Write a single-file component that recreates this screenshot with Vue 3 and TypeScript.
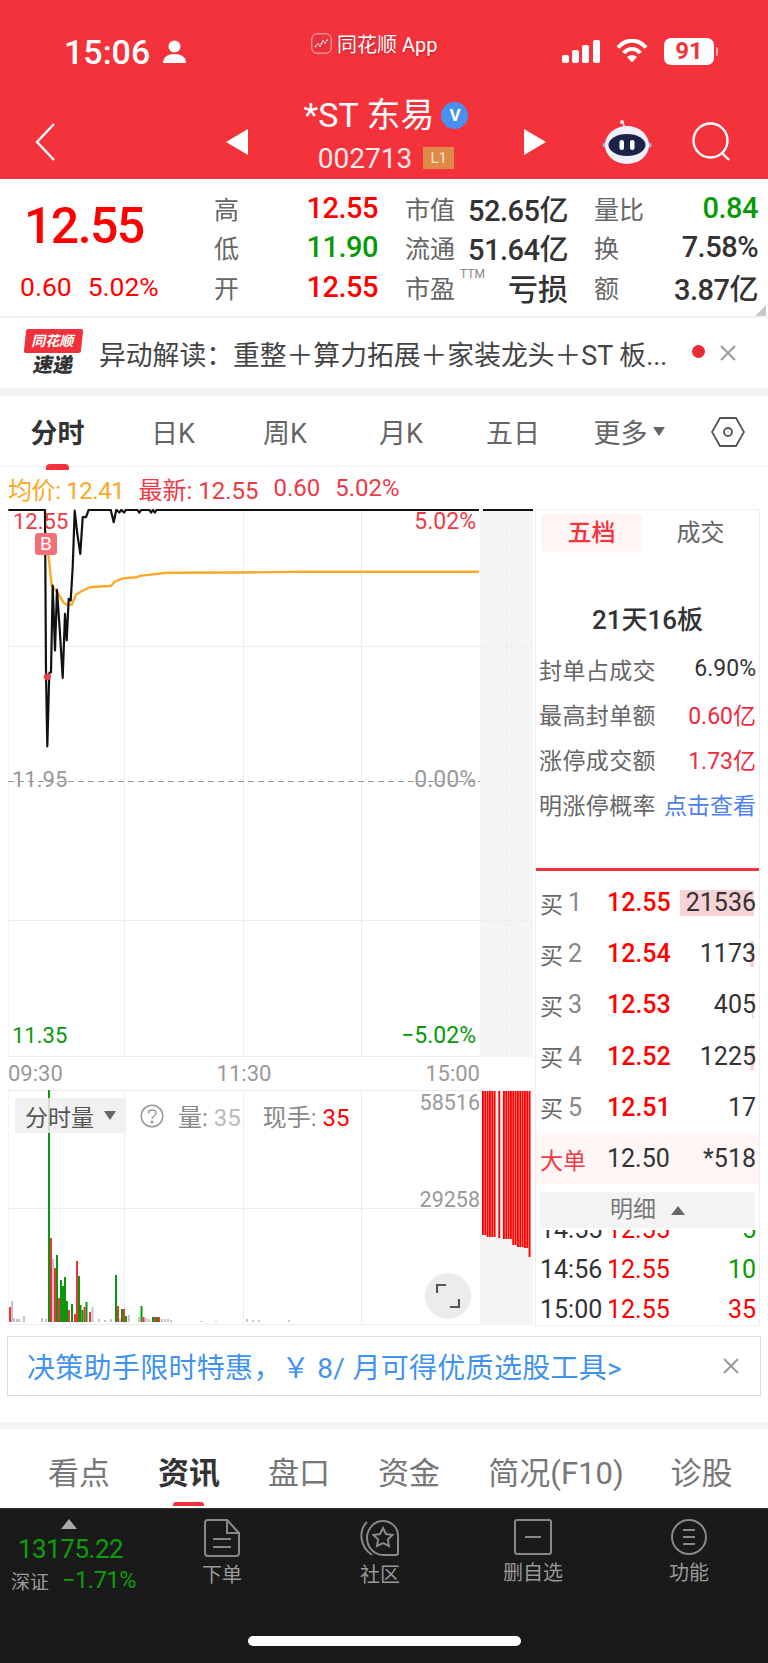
<template>
  <div class="page">
    <header class="head">
      <div class="status">
        <div class="clock">
          <span>15:06</span>
          <svg width="23" height="24" viewBox="0 0 23 24"><circle cx="11.5" cy="6.5" r="6" fill="#fff" /><path d="M0 23c0-6 5-9 11.5-9S23 17 23 23z" fill="#fff" /></svg>
        </div>
        <div class="applabel">
          <svg width="21" height="21" viewBox="0 0 21 21"><rect x="0.8" y="0.8" width="19.4" height="19.4" rx="5" fill="#e8333c" stroke="#f9b9bb" /><path d="M4 14l3-3 2 2 3-5 2 2 3-4" fill="none" stroke="#fff" stroke-width="1.4" stroke-dasharray="2 1" /></svg>
          <span>同花顺 App</span>
        </div>
        <div class="sysicons">
          <svg width="38" height="23" viewBox="0 0 38 23" fill="#fff"><rect x="0" y="15" width="7" height="8" rx="2" /><rect x="10" y="10" width="7" height="13" rx="2" /><rect x="20" y="5" width="7" height="18" rx="2" /><rect x="31" y="0" width="7" height="23" rx="2" /></svg>
          <svg width="32" height="24" viewBox="0 0 32 24" fill="none" stroke="#fff" stroke-width="4"><path d="M2 8.500C10-0.500 22-0.500 30 8.500" /><path d="M7.500 14C12.500 8.500 19.500 8.500 24.500 14" /><path d="M16 23.500l-5-5.500c3-2.500 7-2.500 10 0z" fill="#fff" stroke="none" /></svg>
          <div class="battery"><span>91</span></div>
        </div>
      </div>
      <nav class="nav">
        <svg width="22" height="40" viewBox="0 0 22 40" fill="none" stroke="#fff" stroke-width="2.400"><path d="M20 2L3 20l17 18" /></svg>
        <svg width="22" height="26" viewBox="0 0 22 26" fill="#fff"><path d="M22 0v26L0 13z" /></svg>
        <div class="title">
          <div class="name">
            <span>*ST 东易</span>
            <i class="vbadge">V</i>
          </div>
          <div class="code"><span>002713</span><b>L1</b></div>
        </div>
        <svg width="22" height="26" viewBox="0 0 22 26" fill="#fff"><path d="M0 0v26l22-13z" /></svg>
        <svg class="robot" width="50" height="46" viewBox="0 0 50 46">
          <circle cx="20" cy="3" r="2" fill="#eadff5" />
          <path d="M21 4l2 5" stroke="#eadff5" stroke-width="1.500" />
          <circle cx="3" cy="26" r="2.500" fill="#9fb4ee" /><circle cx="47" cy="26" r="2.500" fill="#9fb4ee" />
          <ellipse cx="25" cy="26" rx="22" ry="19" fill="#eef0fb" />
          <ellipse cx="25" cy="26" rx="18.500" ry="11" fill="#1c2348" />
          <rect x="17.500" y="21" width="4.500" height="10" rx="2.200" fill="#fff" /><rect x="28" y="21" width="4.500" height="10" rx="2.200" fill="#fff" />
        </svg>
        <svg class="search" width="40" height="40" viewBox="0 0 40 40" fill="none" stroke="#fff" stroke-width="2.400"><circle cx="18.500" cy="18.500" r="17" /><path d="M30 31l7 7" /></svg>
      </nav>
    </header>

    <section class="quote">
      <div class="big">
        <div class="bigprice">12.55</div>
        <div class="bigchg"><span>0.60</span><span>5.02%</span></div>
      </div>
      <template v-for="c in quoteCells" :key="c.label">
        <div class="cell" :class="c.cls">
          <span class="lab">{{ c.label }}<sup v-if="c.sup">{{ c.sup }}</sup></span>
          <span class="val" :class="c.color">{{ c.value }}</span>
        </div>
      </template>
      <i class="corner"></i>
    </section>

    <section class="news">
      <div class="newslogo">
        <div class="logotop"><span>同花顺</span></div>
        <div class="logobot">速递</div>
      </div>
      <div class="newstext">异动解读：重整＋算力拓展＋家装龙头＋ST 板...</div>
      <i class="reddot"></i>
      <svg class="x" width="16" height="16" viewBox="0 0 16 16" stroke="#9a9a9a" stroke-width="2"><path d="M1 1l14 14M15 1L1 15" /></svg>
    </section>

    <section class="tabs">
      <span v-for="t in chartTabs" :key="t" class="tab" :class="{ on: t === '分时' }">{{ t }}</span>
      <span class="tab more">更多<i class="tri"></i></span>
      <span class="tab">
        <svg width="34" height="30" viewBox="0 0 34 30" fill="none" stroke="#555" stroke-width="1.800"><path d="M9 1h16l8 14-8 14H9L1 15z" /><circle cx="17" cy="15" r="4" /></svg>
      </span>
    </section>

    <div class="infoline">
      <span class="avg">均价: 12.41</span>
      <span class="latest">最新: 12.55</span>
      <span class="latest">0.60</span>
      <span class="latest">5.02%</span>
    </div>

    <section class="market">
      <div class="charts">
        <div class="pricechart">
          <svg width="527" height="548" viewBox="0 0 527 548">
            <rect x="472" y="0" width="53" height="548" fill="#f4f4f4" />
            <path d="M0 .5V548M0 547.500H472M116.500 0V548M235.500 0V548M353.500 0V548M0 137.500H472M0 411.500H472" stroke="#ececec" fill="none" />
            <path d="M472 137.500H525M472 411.500H525M498.500 0V548" stroke="#e6e6e6" stroke-dasharray="2 3" fill="none" />
            <path d="M0 272.500H472" stroke="#999" stroke-dasharray="6 4" fill="none" />
            <polyline :points="avgPoints" fill="none" stroke="#f9a92b" stroke-width="2.400" />
            <polyline :points="pricePoints" fill="none" stroke="#111" stroke-width="2.200" stroke-linejoin="round" />
            <path d="M475 1H525" stroke="#111" stroke-width="2" />
            <circle cx="39.300" cy="167.700" r="3.500" fill="#e8404a" />
          </svg>
          <span class="axis tl red">12.55</span>
          <span class="bmark">B</span>
          <span class="axis tr red">5.02%</span>
          <span class="axis ml gray">11.95</span>
          <span class="axis mr gray">0.00%</span>
          <span class="axis bl green">11.35</span>
          <span class="axis br green">−5.02%</span>
        </div>
        <div class="times"><span>09:30</span><span>11:30</span><span>15:00</span></div>
        <div class="volchart">
          <svg width="527" height="235" viewBox="0 0 527 235">
            <rect x="472" y="0" width="53" height="235" fill="#f4f4f4" />
            <path d="M0 .5H472M0 .5V235M0 234.500H472M116.500 0V235M235.500 0V235M353.500 0V235M0 118.500H472" stroke="#ececec" fill="none" />
            <rect v-for="(b, i) in volBars" :key="i" :x="b.x" :y="232 - b.h" width="2" :height="b.h" :fill="barColors[b.c]" />
            <rect v-for="(b, i) in closeBars" :key="'c' + i" :x="b.x" y="1" width="1.900" :height="b.h" fill="#f00" />
          </svg>
          <div class="volbar">
            <span class="volsel">分时量<i class="tri"></i></span>
            <svg width="24" height="24" viewBox="0 0 24 24" fill="none" stroke="#999" stroke-width="1.500"><circle cx="12" cy="12" r="10.800" /><path d="M8.500 9.500c0-5 7.500-4.500 7.500-.5 0 3-4 3-4 6" /><circle cx="12" cy="18" r=".8" fill="#999" /></svg>
            <span class="volnum">量: <em>35</em></span>
            <span class="volnum now">现手: <em>35</em></span>
          </div>
          <span class="axis vt gray">58516</span>
          <span class="axis vm gray">29258</span>
          <div class="fullbtn">
            <svg width="24" height="24" viewBox="0 0 24 24" fill="none" stroke="#555" stroke-width="2.200"><path d="M1 9V1h9M23 15v8h-9" /></svg>
          </div>
        </div>
      </div>

      <aside class="side">
        <div class="sidetabs"><span class="on">五档</span><span>成交</span></div>
        <div class="board">21天16板</div>
        <div v-for="s in stats" :key="s.k" class="stat">
          <span>{{ s.k }}</span><span :class="s.cls">{{ s.v }}</span>
        </div>
        <i class="redline"></i>
        <div class="book">
          <div v-for="r in bookRows" :key="r.lab" class="bookrow" :class="{ bigorder: r.big }">
            <span class="side-lab"><b>{{ r.ch }}</b>{{ r.n }}</span>
            <span class="side-price">{{ r.price }}</span>
            <span class="side-qty">
              <i v-if="r.w" :style="{ width: r.w + 'px' }"></i>
              <em>{{ r.qty }}</em>
            </span>
          </div>
        </div>
        <div class="detail">明细<i class="up"></i></div>
        <div class="ticks">
          <div v-for="t in ticks" :key="t.time" class="tick">
            <span>{{ t.time }}</span><span class="red">12.55</span><span :class="t.cls">{{ t.qty }}</span>
          </div>
        </div>
      </aside>
    </section>

    <section class="promo">
      <span>决策助手限时特惠，￥ 8/ 月可得优质选股工具&gt;</span>
      <svg width="16" height="16" viewBox="0 0 16 16" stroke="#9a9a9a" stroke-width="2"><path d="M1 1l14 14M15 1L1 15" /></svg>
    </section>

    <section class="infotabs">
      <span v-for="t in infoTabs" :key="t" :class="{ on: t === '资讯' }">{{ t }}</span>
    </section>

    <footer class="foot">
      <div class="index">
        <i class="idxup"></i>
        <div class="idxval">13175.22</div>
        <div class="idxline"><span>深证</span><em>−1.71%</em></div>
      </div>
      <div class="act">
        <svg width="36" height="38" viewBox="0 0 36 38" fill="none" stroke="#888" stroke-width="2"><path d="M4 1h19l12 13v20a3 3 0 0 1-3 3H4a3 3 0 0 1-3-3V4a3 3 0 0 1 3-3z" /><path d="M23 1v13h12M9 20h18M9 28h18" /></svg>
        <span>下单</span>
      </div>
      <div class="act">
        <svg width="42" height="38" viewBox="0 0 42 38" fill="none" stroke="#888" stroke-width="2"><path d="M13 36C1 28-1 12 8 3" /><path d="M24 2c8 0 15 6 15 15v17a2 2 0 0 1-2 2H24C15 36 8 28 8 19S15 2 24 2z" /><path d="M24 9l3 6 6.500 1-4.700 4.500 1.200 6.500-6-3-6 3 1.200-6.500L14.500 16l6.500-1z" /></svg>
        <span>社区</span>
      </div>
      <div class="act">
        <svg width="38" height="36" viewBox="0 0 38 36" fill="none" stroke="#888" stroke-width="2"><rect x="1" y="1" width="36" height="34" rx="2" /><path d="M11 18h16" /></svg>
        <span>删自选</span>
      </div>
      <div class="act">
        <svg width="36" height="36" viewBox="0 0 36 36" fill="none" stroke="#888" stroke-width="2"><circle cx="18" cy="18" r="17" /><path d="M12 11h12M12 18h12M12 25h12" /></svg>
        <span>功能</span>
      </div>
      <i class="homebar"></i>
    </footer>
  </div>
</template>

<script setup lang="ts">
type Bar = { x: number; h: number; c: "r" | "g" | "n" };

const quoteCells = [
  { label: "高", value: "12.55", color: "red", cls: "c1" },
  { label: "市值", value: "52.65亿", color: "dark", cls: "c2" },
  { label: "量比", value: "0.84", color: "green", cls: "c3" },
  { label: "低", value: "11.90", color: "green", cls: "c1" },
  { label: "流通", value: "51.64亿", color: "dark", cls: "c2" },
  { label: "换", value: "7.58%", color: "dark", cls: "c3" },
  { label: "开", value: "12.55", color: "red", cls: "c1" },
  { label: "市盈", sup: "TTM", value: "亏损", color: "dark loss", cls: "c2" },
  { label: "额", value: "3.87亿", color: "dark", cls: "c3" },
];

const chartTabs = ["分时", "日K", "周K", "月K", "五日"];
const infoTabs = ["看点", "资讯", "盘口", "资金", "简况(F10)", "诊股"];

const stats = [
  { k: "封单占成交", v: "6.90%", cls: "dark" },
  { k: "最高封单额", v: "0.60亿", cls: "red2" },
  { k: "涨停成交额", v: "1.73亿", cls: "red2" },
  { k: "明涨停概率", v: "点击查看", cls: "blue" },
];

const bookRows = [
  { lab: "b1", ch: "买", n: "1", price: "12.55", qty: "21536", w: 74 },
  { lab: "b2", ch: "买", n: "2", price: "12.54", qty: "1173", w: 4 },
  { lab: "b3", ch: "买", n: "3", price: "12.53", qty: "405", w: 2 },
  { lab: "b4", ch: "买", n: "4", price: "12.52", qty: "1225", w: 4 },
  { lab: "b5", ch: "买", n: "5", price: "12.51", qty: "17", w: 0 },
  { lab: "big", ch: "大单", n: "", price: "12.50", qty: "*518", w: 0, big: true },
];

const ticks = [
  { time: "14:55", qty: "5", cls: "green" },
  { time: "14:56", qty: "10", cls: "green" },
  { time: "15:00", qty: "35", cls: "red" },
];

// traced from the chart at 3x, offset from the plot's corner
const toPoints = (raw: number[][]) =>
  raw.map(([x, y]) => `${(x / 3 - 8).toFixed(1)},${(y / 3 - 8.5).toFixed(1)}`).join(" ");

const pricePoints = toPoints([
  [25, 28], [135, 28], [138, 520], [142, 738], [148, 517], [153, 515], [158, 255], [165, 450],
  [171, 268], [180, 400], [188, 532], [195, 340], [200, 420], [206, 295], [212, 300], [218, 200],
  [224, 30], [232, 100], [241, 160], [248, 50], [258, 50], [266, 28], [332, 28], [341, 65],
  [349, 28], [358, 36], [364, 28], [372, 36], [378, 28], [412, 28], [418, 36], [424, 28],
  [448, 28], [453, 36], [459, 28], [464, 36], [470, 28], [1437, 28],
]);

const avgPoints = toPoints([
  [145, 160], [155, 255], [175, 280], [190, 305], [200, 313], [215, 313], [228, 282], [245, 272],
  [270, 260], [333, 256], [345, 243], [370, 233], [410, 230], [420, 226], [500, 217], [720, 216],
  [900, 214], [1437, 214],
]);

const barColors = { r: "#f0303a", g: "#0a980a", n: "#c4c4c4" };

const volBars: Bar[] = (
  [
    [9, 15, "r"], [11, 21, "n"], [13, 4, "n"], [16, 3, "n"], [18, 3, "n"], [23, 6, "n"], [41, 4, "n"], [45, 3, "n"],
    [48, 232, "g"], [50, 84, "r"], [52, 63, "n"], [54, 54, "r"], [56, 67, "g"], [58, 24, "r"], [60, 42, "g"],
    [62, 36, "g"], [64, 45, "g"], [66, 21, "g"], [68, 12, "r"], [71, 18, "g"], [74, 8, "r"], [76, 61, "r"],
    [78, 46, "g"], [79.5, 17, "g"], [81.5, 12, "g"], [83.5, 15, "r"], [85.5, 20, "g"], [89, 10, "r"], [91.5, 15, "n"],
    [98, 3, "n"], [104, 2, "n"], [110, 3, "n"], [115, 47, "g"], [117, 16, "r"], [119, 3, "n"], [121, 13, "g"],
    [123, 13, "r"], [125, 6, "g"], [128, 7, "n"], [138, 5, "n"], [140.5, 16, "g"], [142.5, 5, "r"], [145, 4, "n"],
    [148, 3, "n"], [152, 5, "g"], [154, 5, "r"], [156, 5, "g"], [158, 5, "r"], [161, 3, "n"], [164, 3, "n"],
    [167, 3, "n"], [170, 2, "n"], [200, 1, "n"], [215, 1, "n"], [246, 3, "n"], [252, 2, "n"], [258, 2, "n"], [288, 2, "n"],
  ] as [number, number, Bar["c"]][]
).map(([px, h, c]) => ({ x: px - 8, h, c }));

// the closing auction bars sit in the grey strip right of the plot
const closeHeights = [144, 144, 146, 146, 146, 146, 0, 147, 0, 148, 148, 148, 148, 154, 154, 156, 156, 156, 157, 157, 166];
const closeBars = closeHeights.map((h, i) => ({ x: 474 + i * 2.33, h })).filter((b) => b.h > 0);
</script>

<style>
html,
body {
  margin: 0;
  background: #fff;
}
</style>

<style scoped>
.page {
  width: 768px;
  height: 1663px;
  overflow: hidden;
  display: flex;
  flex-direction: column;
  background: #fff;
  color: #333;
  font-family: Roboto, "Noto Sans CJK SC", sans-serif;
}
i,
em {
  font-style: normal;
}
.red {
  color: #f00;
}
.green {
  color: #079a07;
}
.dark {
  color: #333;
}
.gray {
  color: #999;
}
.red2 {
  color: #f5283c;
}
.blue {
  color: #4f80f0;
}

/* header */
.head {
  height: 179px;
  background: #f3323c;
  color: #fff;
  flex: none;
}
.status {
  height: 104px;
  padding: 0 54px 0 64px;
  box-sizing: border-box;
  display: grid;
  grid-template-columns: 249px 249px 1fr;
  align-items: center;
}
.clock {
  display: flex;
  align-items: center;
  gap: 13px;
  font-size: 34px;
  font-weight: 500;
}
.applabel {
  display: flex;
  align-items: center;
  gap: 5px;
  font-size: 20px;
  margin-top: -18px;
  margin-left: -2px;
  text-shadow: 0 1px 2px rgba(120, 0, 0, 0.45);
}
.sysicons {
  display: flex;
  align-items: center;
  gap: 16px;
  margin-top: -2px;
}
.battery {
  width: 50px;
  height: 27px;
  background: #fff;
  border-radius: 7px;
  display: flex;
  align-items: center;
  justify-content: center;
  position: relative;
  color: #f3323c;
  font-size: 24px;
  font-weight: 700;
}
.battery::after {
  content: "";
  position: absolute;
  right: -4px;
  top: 9px;
  width: 2px;
  height: 9px;
  background: rgba(255, 255, 255, 0.6);
  border-radius: 0 2px 2px 0;
}
.nav {
  height: 75px;
  padding-left: 34px;
  display: grid;
  grid-template-columns: 192px 22px 276px 22px 106px 80px;
  align-items: center;
}
.robot,
.search {
  justify-self: end;
}
.title {
  display: flex;
  flex-direction: column;
  align-items: center;
  height: 75px;
}
.name {
  display: flex;
  align-items: center;
  gap: 7px;
  height: 40px;
  font-size: 34px;
  line-height: 40px;
  margin-top: -9px;
  white-space: nowrap;
}
.vbadge {
  width: 27px;
  height: 27px;
  border-radius: 50%;
  background: #4a90f0;
  font-size: 17px;
  font-weight: 700;
  line-height: 27px;
  text-align: center;
}
.code {
  display: flex;
  align-items: center;
  gap: 11px;
  font-size: 28px;
  height: 36px;
  margin-top: 5px;
  color: #ffe9e9;
}
.code b {
  width: 31px;
  height: 22px;
  background: #e08a45;
  color: #ffe9d5;
  font-size: 15px;
  font-weight: 400;
  line-height: 22px;
  text-align: center;
}

/* quote */
.quote {
  position: relative;
  height: 137px;
  padding-top: 9px;
  box-sizing: border-box;
  flex: none;
  display: grid;
  grid-template-columns: 214px 164px 190px 190px;
  grid-template-rows: repeat(3, 39.5px);
}
.big {
  grid-row: 1 / 4;
  padding-left: 24px;
}
.bigprice {
  color: #f00;
  font-size: 50px;
  font-weight: 500;
  line-height: 56px;
  margin-top: 10px;
  letter-spacing: -1.6px;
}
.bigchg {
  display: flex;
  gap: 16px;
  color: #f00;
  font-size: 26.500px;
  line-height: 32px;
  margin-top: 17px;
  margin-left: -4px;
}
.cell {
  display: flex;
  align-items: center;
  justify-content: space-between;
  font-size: 29px;
  letter-spacing: -0.5px;
}
.c2 {
  padding-left: 27px;
}
.c3 {
  padding-left: 26px;
}
.lab {
  color: #666;
  font-size: 25px;
  letter-spacing: 0;
  position: relative;
}
.lab sup {
  position: absolute;
  left: 55px;
  top: -2px;
  font-size: 12px;
  line-height: 14px;
  color: #888;
}
.val {
  font-weight: 500;
}
.val.loss {
  font-size: 30px;
  letter-spacing: 0;
}
.corner {
  position: absolute;
  right: 2px;
  bottom: 0;
  border-style: solid;
  border-width: 0 0 11px 11px;
  border-color: transparent transparent #c8c8c8 transparent;
}

/* news */
.news {
  height: 72px;
  flex: none;
  box-sizing: border-box;
  border-top: 2px solid #f2f2f2;
  display: flex;
  align-items: center;
  padding-left: 25px;
  position: relative;
}
.newslogo {
  width: 57px;
  margin-right: 17px;
  text-align: center;
}
.logotop {
  height: 24px;
  background: #f0303a;
  transform: skewX(-6deg);
  border-radius: 2px;
  color: #fff;
  font-size: 14px;
  font-weight: 700;
  line-height: 24px;
}
.logotop span {
  display: block;
  transform: skewX(-8deg);
}
.logobot {
  font-size: 20px;
  line-height: 24px;
  font-weight: 900;
  color: #333;
  transform: skewX(-10deg);
}
.newstext {
  font-size: 26.800px;
  color: #444;
  white-space: nowrap;
  width: 592px;
  overflow: hidden;
}
.reddot {
  position: absolute;
  left: 692px;
  top: 27px;
  width: 13px;
  height: 13px;
  border-radius: 50%;
  background: #e92b33;
}
.x {
  position: absolute;
  left: 720px;
  top: 27px;
}

/* chart tabs */
.tabs {
  height: 79px;
  flex: none;
  box-sizing: border-box;
  border-top: 8px solid #f4f4f4;
  border-bottom: 1px solid #eee;
  display: grid;
  grid-template-columns: 115px 116px 108px 124px 100px 132px 66px;
  align-items: center;
  justify-items: center;
}
.tab {
  font-size: 27px;
  color: #666;
  position: relative;
  display: flex;
  align-items: center;
  margin-top: 1px;
}
.tab.on {
  color: #333;
  font-weight: 700;
}
.tab.on::after {
  content: "";
  position: absolute;
  left: 15px;
  width: 23px;
  height: 6px;
  bottom: -19px;
  background: #f3323c;
  border-radius: 4px 4px 0 0;
}
.tri {
  display: inline-block;
  margin-left: 5px;
  border-style: solid;
  border-width: 9px 6px 0;
  border-color: #666 transparent transparent;
}

/* info */
.infoline {
  height: 42px;
  flex: none;
  box-sizing: border-box;
  padding: 0 0 0 8px;
  display: flex;
  align-items: center;
  gap: 15px;
  font-size: 24px;
}
.avg {
  color: #f9a825;
  letter-spacing: -0.4px;
  margin-right: -1px;
}
.latest {
  color: #ee3a44;
}

/* market */
.market {
  height: 817px;
  flex: none;
  display: flex;
}
.charts {
  width: 527px;
  margin-left: 8px;
  flex: none;
}
.pricechart {
  position: relative;
  height: 548px;
}
.pricechart svg,
.volchart > svg {
  display: block;
}
.axis {
  position: absolute;
  font-size: 22px;
  line-height: 26px;
}
.tl {
  left: 5px;
  top: 0;
  color: #ee3a44;
}
.tr {
  right: 59px;
  top: 0;
  color: #ee3a44;
  font-size: 23px;
}
.ml {
  left: 4px;
  top: 258px;
}
.mr {
  right: 59px;
  top: 258px;
  font-size: 23px;
}
.bl {
  left: 4px;
  top: 514px;
}
.br {
  right: 59px;
  top: 514px;
  font-size: 23px;
}
.bmark {
  position: absolute;
  left: 27px;
  top: 24px;
  width: 22px;
  height: 22px;
  background: #f47079;
  color: #fff;
  font-size: 19px;
  line-height: 22px;
  text-align: center;
  border-radius: 3px;
}
.times {
  height: 33px;
  width: 472px;
  display: flex;
  justify-content: space-between;
  align-items: center;
  color: #999;
  font-size: 22px;
}
.volchart {
  position: relative;
  height: 235px;
}
.volbar {
  position: absolute;
  left: 7px;
  top: 8px;
  display: flex;
  align-items: center;
  gap: 14px;
}
.volsel {
  width: 111px;
  height: 35px;
  box-sizing: border-box;
  padding-left: 10px;
  background: rgba(238, 238, 238, 0.85);
  border-radius: 3px;
  display: flex;
  align-items: center;
  color: #555;
  font-size: 23px;
}
.volsel .tri {
  margin-left: 10px;
}
.volnum {
  color: #888;
  font-size: 24px;
}
.volnum em {
  color: #bbb;
}
.volnum.now {
  margin-left: 8px;
}
.volnum.now em {
  color: #f00;
}
.vt {
  right: 55px;
  top: 0;
  font-size: 21.500px;
}
.vm {
  right: 55px;
  top: 97px;
  font-size: 21.500px;
}
.fullbtn {
  position: absolute;
  left: 417px;
  top: 183px;
  width: 46px;
  height: 46px;
  border-radius: 50%;
  background: #ececec;
  display: flex;
  align-items: center;
  justify-content: center;
}

/* right side */
.side {
  width: 225px;
  flex: none;
  box-sizing: border-box;
  border: 1px solid #eee;
  display: flex;
  flex-direction: column;
  padding-top: 4px;
}
.sidetabs {
  height: 38px;
  display: grid;
  grid-template-columns: 101px 1fr;
  margin-left: 5px;
  font-size: 24px;
  line-height: 38px;
  text-align: center;
  color: #666;
  flex: none;
}
.sidetabs .on {
  background: #fff5f5;
  border-radius: 4px;
  color: #f5333c;
  font-weight: 500;
}
.board {
  margin-top: 48px;
  height: 40px;
  line-height: 40px;
  text-align: center;
  font-size: 26px;
  font-weight: 500;
  flex: none;
}
.stat {
  height: 45px;
  padding: 0 3px;
  display: flex;
  justify-content: space-between;
  align-items: center;
  color: #666;
  font-size: 23px;
  letter-spacing: 0.4px;
  flex: none;
}
.stat:nth-of-type(3) {
  margin-top: 6px;
}
.stat span:last-child {
  letter-spacing: 0;
}
.redline {
  height: 3px;
  margin: 42px 0 0;
  background: #ef3340;
  flex: none;
}
.book {
  margin-top: 6px;
  flex: none;
}
.bookrow {
  height: 51.200px;
  display: grid;
  grid-template-columns: 67px 70px 1fr;
  align-items: center;
  padding: 0 3px 0 4px;
  font-size: 25px;
}
.bookrow.bigorder {
  background: #fff6f6;
}
.side-lab {
  color: #888;
  display: flex;
  align-items: center;
  gap: 5px;
}
.side-lab b {
  color: #666;
  font-size: 23px;
  font-weight: 400;
}
.bigorder .side-lab b {
  color: #ee3a44;
}
.side-price {
  color: #f00;
  font-weight: 500;
}
.bigorder .side-price {
  color: #333;
  font-weight: 400;
}
.side-qty {
  position: relative;
  text-align: right;
}
.side-qty i {
  position: absolute;
  right: 2px;
  top: 2px;
  bottom: 1px;
  background: #f8d3d5;
}
.side-qty em {
  position: relative;
}
.detail {
  height: 36px;
  margin: 8px 4px 0;
  background: #f4f4f4;
  color: #777;
  font-size: 23px;
  line-height: 36px;
  display: flex;
  justify-content: center;
  align-items: center;
  gap: 15px;
  flex: none;
}
.up {
  border-style: solid;
  border-width: 0 7px 9px;
  border-color: transparent transparent #666;
}
.ticks {
  flex: 1;
  overflow: hidden;
  margin-top: 2px;
  font-size: 25px;
}
.tick {
  height: 40px;
  display: grid;
  grid-template-columns: 67px 1fr auto;
  align-items: center;
  padding: 0 3px 0 4px;
}
.tick:first-child {
  margin-top: -21px;
}

/* promo */
.promo {
  height: 60px;
  margin: 10px 7px 0;
  flex: none;
  box-sizing: border-box;
  border: 1px solid #ddd;
  padding: 0 21px 0 19px;
  display: flex;
  align-items: center;
  justify-content: space-between;
  color: #3f93ef;
  font-size: 28px;
  letter-spacing: 0.3px;
  white-space: nowrap;
}

/* info tabs */
.infotabs {
  margin-top: 26px;
  height: 86px;
  flex: none;
  box-sizing: border-box;
  border-top: 7px solid #f4f4f4;
  display: grid;
  grid-template-columns: 110px 110px 110px 110px 184px 1fr;
  padding: 4px 13px 0 24px;
  align-items: center;
  justify-items: center;
  font-size: 31px;
  color: #777;
}
.infotabs span {
  position: relative;
  white-space: nowrap;
}
.infotabs .on {
  color: #333;
  font-weight: 700;
}
.infotabs .on::after {
  content: "";
  position: absolute;
  left: 15px;
  width: 31px;
  height: 4px;
  bottom: -13px;
  background: #f3323c;
  border-radius: 3px 3px 0 0;
}

/* footer */
.foot {
  flex: 1;
  background: #1a1a1a;
  border-top: 1px solid #333;
  box-sizing: border-box;
  display: grid;
  grid-template-columns: 140px 164px 152px 154px 158px;
  align-items: start;
  position: relative;
}
.index {
  padding-left: 11px;
}
.idxup {
  display: block;
  margin: 10px 0 0 50px;
  width: 0;
  border-style: solid;
  border-width: 0 8px 10px;
  border-color: transparent transparent #aaa;
}
.idxval {
  color: #0aa00a;
  font-size: 26px;
  line-height: 30px;
  margin: 5px 0 0 7px;
  letter-spacing: -0.5px;
}
.idxline {
  display: flex;
  align-items: center;
  gap: 13px;
  color: #999;
  font-size: 19px;
  margin-top: 2px;
  white-space: nowrap;
}
.idxline em {
  color: #0aa00a;
  font-size: 23.500px;
  letter-spacing: -0.4px;
}
.act {
  display: flex;
  flex-direction: column;
  align-items: center;
  padding-top: 10px;
  color: #999;
  font-size: 20px;
  line-height: 28px;
  height: 75px;
}
.act span {
  margin-top: 4px;
}
.homebar {
  position: absolute;
  left: 248px;
  top: 127px;
  width: 273px;
  height: 10px;
  background: #fff;
  border-radius: 5px;
}
</style>
